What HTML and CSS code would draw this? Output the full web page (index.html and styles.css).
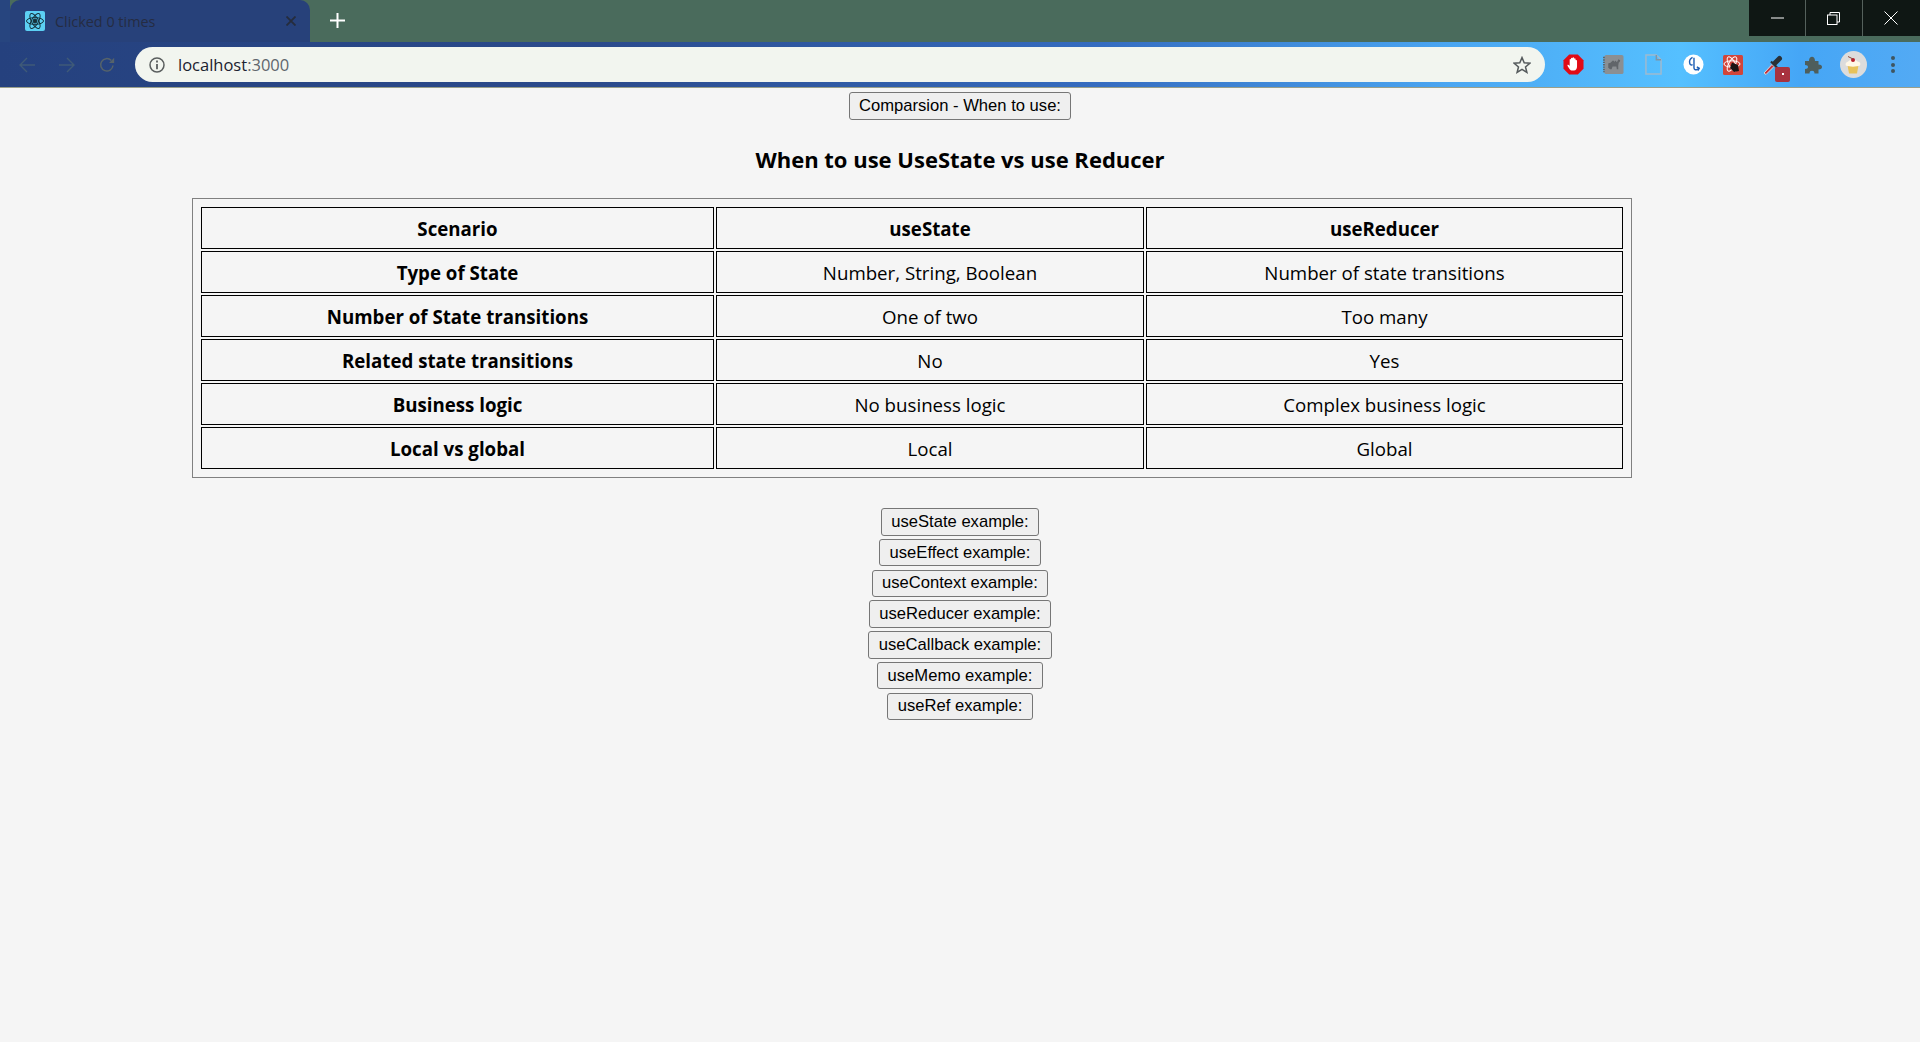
FILE: index.html
```html
<!DOCTYPE html>
<html lang="en">
<head>
    <meta charset="UTF-8">
    <meta name="viewport" content="width=device-width, initial-scale=1.0">
    <title>Clicked 0 times</title>
    <link rel="stylesheet" href="styles.css">
</head>
<body>

    <!-- Browser window -->
    <header class="browser">
        <div class="tab-strip">
            <div class="tab">
                <span class="favicon">
                    <svg viewBox="0 0 20 20" width="20" height="20" fill="none" stroke="#15303a" stroke-width="1">
                        <circle cx="10" cy="10" r="2" fill="#15303a"/>
                        <ellipse cx="10" cy="10" rx="8.5" ry="3.4"/>
                        <ellipse cx="10" cy="10" rx="8.5" ry="3.4" transform="rotate(60 10 10)"/>
                        <ellipse cx="10" cy="10" rx="8.5" ry="3.4" transform="rotate(120 10 10)"/>
                    </svg>
                </span>
                <span class="tab-title">Clicked 0 times</span>
                <svg class="tab-close" viewBox="0 0 10 10" width="10" height="10" stroke="#252c3c" stroke-width="1.8">
                    <path d="M0.5 0.5L9.5 9.5M9.5 0.5L0.5 9.5"/>
                </svg>
            </div>
            <svg class="new-tab" viewBox="0 0 15 15" width="15" height="15" stroke="#fff" stroke-width="2">
                <path d="M7.5 0V15M0 7.5H15"/>
            </svg>
            <div class="window-controls">
                <span class="win-btn win-min">
                    <svg viewBox="0 0 13 2" width="13" height="2" stroke="#fff"><path d="M0 1H13"/></svg>
                </span>
                <span class="win-btn win-max">
                    <svg viewBox="0 0 13 13" width="13" height="13" fill="none" stroke="#fff">
                        <path d="M3 3V0.5H12.5V10H10"/>
                        <rect x="0.5" y="3" width="9.5" height="9.5"/>
                    </svg>
                </span>
                <span class="win-btn win-close">
                    <svg viewBox="0 0 14 14" width="14" height="14" stroke="#fff"><path d="M0.5 0.5L13.5 13.5M13.5 0.5L0.5 13.5"/></svg>
                </span>
            </div>
        </div>

        <div class="toolbar">
            <svg class="nav-icon" viewBox="0 0 16 16" width="16" height="16" fill="none" stroke="#3f5a78" stroke-width="1.4">
                <path d="M16 8H1M8 1L1 8L8 15"/>
            </svg>
            <svg class="nav-icon" viewBox="0 0 16 16" width="16" height="16" fill="none" stroke="#3f5a78" stroke-width="1.4">
                <path d="M0 8H15M8 1L15 8L8 15"/>
            </svg>
            <svg class="nav-icon" viewBox="0 0 16 16" width="16" height="16" fill="none" stroke="#56636a" stroke-width="1.5">
                <path d="M14 8.5A6.2 6.2 0 1 1 12.2 3.4"/>
                <path d="M15.2 0.8V6H10Z" fill="#56636a" stroke="none"/>
            </svg>

            <div class="omnibox">
                <svg class="info-icon" viewBox="0 0 16 16" width="16" height="16" fill="none" stroke="#5a5e5e" stroke-width="1.5">
                    <circle cx="8" cy="8" r="7"/>
                    <path d="M8 7V12.2" stroke-width="1.8"/>
                    <path d="M8 3.6V5.4" stroke-width="1.8"/>
                </svg>
                <span class="url">localhost<span class="url-port">:3000</span></span>
                <svg class="star-icon" viewBox="0 0 18 18" width="18" height="18" fill="none" stroke="#555a5c" stroke-width="1.5">
                    <path d="M9 1.6L11.2 6.8L16.8 7.2L12.5 10.9L13.9 16.4L9 13.4L4.1 16.4L5.5 10.9L1.2 7.2L6.8 6.8Z"/>
                </svg>
            </div>

            <div class="extensions">
                <svg viewBox="0 0 22 22" width="21" height="21">
                    <path d="M6.5 0.5H15.5L21.5 6.5V15.5L15.5 21.5H6.5L0.5 15.5V6.5Z" fill="#e20a16"/>
                    <path d="M7 16C5.5 14 4.6 12.5 4.6 11.6C5.4 11 6.2 11.6 7 12.6V6C7 5 8.3 5 8.4 6V4.5C8.5 3.6 9.8 3.6 10 4.5V4C10.2 3.1 11.5 3.1 11.6 4V5C11.8 4.2 13.1 4.3 13.2 5.2V6.6C13.4 6 14.6 6 14.7 7V13C14.7 15.5 13.6 17 11.5 17.3H9.5C8.4 17.3 7.7 16.9 7 16Z" fill="#fff"/>
                </svg>
                <svg viewBox="0 0 22 22" width="21" height="21">
                    <rect x="1.5" y="1" width="20" height="20" rx="2" fill="#8b8f92"/>
                    <path d="M1 3V19" stroke="#5f6468" stroke-width="2" stroke-dasharray="1.5 1"/>
                    <path d="M5.5 14.5V10.5C5.5 9.5 6.5 9.5 7.5 9.5L9.5 7.5C10.5 6 11.5 7 12 8.5C12.5 7 13.5 6.5 14 8C14.6 9.5 15.5 7 16 5.5L18 6.5L17.5 8.5L16.5 9L16 12V16H14.5L14 13H10L9 16H7.5Z" fill="#616569"/>
                </svg>
                <svg viewBox="0 0 18 22" width="17" height="21" fill="none" stroke="#9dbad0" stroke-width="1.6">
                    <path d="M1 1H12L17 6V21H1Z"/>
                    <path d="M12 1V6H17" stroke="#7e95a8"/>
                </svg>
                <svg viewBox="0 0 22 22" width="21" height="21" fill="none" stroke="#1f5fb5" stroke-width="1.5">
                    <circle cx="11" cy="11" r="10.5" fill="#fff" stroke="none"/>
                    <path d="M10 3.5C8 4.5 6.5 7 7 9.5C7.4 11.5 9 12 10 11"/>
                    <path d="M11.5 4V14.5C11.5 16.5 13 17 15 16L17 15"/>
                    <path d="M14.5 13.5L17 15L15.5 17.5"/>
                </svg>
                <svg viewBox="0 0 22 22" width="22" height="22" fill="none" stroke="#fff" stroke-width="1">
                    <rect x="1" y="1" width="20" height="20" rx="1.5" fill="#d2453a" stroke="none"/>
                    <ellipse cx="10" cy="10" rx="8" ry="3.2"/>
                    <ellipse cx="10" cy="10" rx="8" ry="3.2" transform="rotate(60 10 10)"/>
                    <ellipse cx="10" cy="10" rx="8" ry="3.2" transform="rotate(120 10 10)"/>
                    <path d="M10 8.5L16 11L17 17L12 18L8 14Z" fill="#1c1414" stroke="none"/>
                </svg>
                <span class="ext-dropper">
                    <svg viewBox="0 0 20 20" width="20" height="20" fill="none">
                        <path d="M1 18L9 9.5L11 11.5L3 19.5Z" fill="#c8313a" stroke="#d5d9de"/>
                        <path d="M8 6.5L14 12.5" stroke="#2a3036" stroke-width="2.2"/>
                        <path d="M12 8L16.5 3.5" stroke="#2a3036" stroke-width="5" stroke-linecap="round"/>
                    </svg>
                    <span class="ext-badge"><i></i></span>
                </span>
                <svg viewBox="0 0 18 18" width="18" height="18">
                    <path d="M1 5H5C5 2 6.5 0.8 8 0.8C9.5 0.8 11 2 11 5H14.5V8.5C17 8.5 18 9.8 18 11C18 12.2 17 13.5 14.5 13.5V17.5H10.5C10.5 15.5 9.5 14.8 8 14.8C6.5 14.8 5.5 15.5 5.5 17.5H1V13C3 13 4 12.2 4 11C4 9.8 3 9 1 9Z" fill="#4e5e5c"/>
                </svg>
                <span class="avatar">
                    <svg viewBox="0 0 20 20" width="20" height="20">
                        <path d="M4.5 10L6 18.5H14L15.5 10Z" fill="#e8c25a"/>
                        <path d="M2.8 10.5C2 8 4 7 5 6.8C6 4.5 13 4 14.5 6.5C17 6.8 18 8.5 17 10.5C13 12 7 12 2.8 10.5Z" fill="#fff7e6"/>
                        <circle cx="10" cy="5" r="2" fill="#b81d2c"/>
                        <path d="M10 4L5 1.5" stroke="#8b4a3a"/>
                    </svg>
                </span>
                <span class="menu-dots"><i></i><i></i><i></i></span>
            </div>
        </div>
    </header>

    <!-- Page content -->
    <main class="page">
        <button class="example-btn comparison-btn">Comparsion - When to use:</button>
        <h2 class="table-title">When to use UseState vs use Reducer</h2>

        <table class="compare-table">
            <colgroup>
                <col class="col-scenario">
                <col class="col-state">
                <col class="col-reducer">
            </colgroup>
            <tr><th>Scenario</th><th>useState</th><th>useReducer</th></tr>
            <tr><th>Type of State</th><td>Number, String, Boolean</td><td>Number of state transitions</td></tr>
            <tr><th>Number of State transitions</th><td>One of two</td><td>Too many</td></tr>
            <tr><th>Related state transitions</th><td>No</td><td>Yes</td></tr>
            <tr><th>Business logic</th><td>No business logic</td><td>Complex business logic</td></tr>
            <tr><th>Local vs global</th><td>Local</td><td>Global</td></tr>
        </table>

        <div class="example-list">
            <button class="example-btn">useState example:</button>
            <button class="example-btn">useEffect example:</button>
            <button class="example-btn">useContext example:</button>
            <button class="example-btn">useReducer example:</button>
            <button class="example-btn">useCallback example:</button>
            <button class="example-btn">useMemo example:</button>
            <button class="example-btn">useRef example:</button>
        </div>
    </main>

</body>
</html>
```

FILE: styles.css
```css
* {
    box-sizing: border-box;
}
html, body {
    height: 100%;
}
body {
    margin: 0;
    background-color: #f5f5f5;
    color: #000;
    font-family: "Open Sans", sans-serif;
    overflow: hidden;
}

/* Browser window */
.browser {
    height: 88px;
    border-bottom: 1px solid #9a9f8a;
}
.tab-strip {
    display: flex;
    align-items: flex-start;
    height: 42px;
    padding-left: 10px;
    background: linear-gradient(to right, #27457f 10px, #4a6b5c 10px);
}
.tab {
    display: flex;
    align-items: center;
    width: 300px;
    height: 42px;
    padding: 0 14px 0 15px;
    background-color: #27417a;
    border-radius: 10px 10px 0 0;
}
.favicon {
    display: flex;
    align-items: center;
    justify-content: center;
    width: 20px;
    height: 20px;
    background-color: #5cd0f4;
    border-radius: 2px;
}
.tab-title {
    flex: 1;
    margin-left: 10px;
    font-size: 14.4px;
    color: #252c42;
}
.new-tab {
    margin: 13px 0 0 20px;
}
.window-controls {
    display: flex;
    height: 36px;
    margin-left: auto;
    background-color: #0f1714;
}
.win-btn {
    display: flex;
    align-items: center;
    justify-content: center;
    height: 36px;
}
.win-min {
    width: 56px;
}
.win-max {
    width: 58px;
    padding-right: 2px;
    border-left: 1px solid #55615c;
    border-right: 1px solid #55615c;
}
.win-close {
    width: 57px;
    padding-right: 2px;
}
.toolbar {
    display: flex;
    align-items: center;
    height: 45px;
    padding-left: 19px;
    background: linear-gradient(to right, #25417e 0, #2b4a8c 600px, #356cc0 1100px, #4aa6f2 1450px, #55c0ff 1680px, #45a6f6 1800px, #53aaf4 1920px);
}
.nav-icon {
    margin-right: 24px;
}
.omnibox {
    display: flex;
    align-items: center;
    width: 1410px;
    height: 35px;
    margin-left: -4px;
    padding: 0 14px;
    background-color: #f2f5ef;
    border-radius: 18px;
}
.info-icon {
    margin-right: 13px;
}
.url {
    flex: 1;
    font-size: 16.5px;
    color: #1b2230;
}
.url-port {
    color: #5f666c;
}
.extensions {
    display: grid;
    grid-auto-flow: column;
    grid-auto-columns: 40px;
    align-items: center;
    justify-items: center;
    padding-left: 8px;
}
.ext-dropper {
    position: relative;
    display: block;
    width: 20px;
    height: 20px;
}
.ext-badge {
    position: absolute;
    left: 12px;
    top: 12px;
    display: flex;
    align-items: center;
    justify-content: center;
    width: 15px;
    height: 15px;
    background-color: #a8323f;
    border-radius: 2px;
}
.ext-badge i {
    width: 2px;
    height: 2px;
    background-color: #fff;
}
.avatar {
    display: flex;
    align-items: center;
    justify-content: center;
    width: 27px;
    height: 27px;
    background-color: #dcdcdc;
    border-radius: 50%;
}
.menu-dots {
    display: flex;
    flex-direction: column;
    gap: 2.5px;
}
.menu-dots i {
    display: block;
    width: 4px;
    height: 4px;
    background-color: #3f5560;
    border-radius: 50%;
}

/* Page content */
.page {
    padding-top: 4px;
    text-align: center;
}
.example-btn {
    display: block;
    height: 27.5px;
    padding: 0 9.5px;
    background-color: #efefef;
    border: 1px solid #767676;
    border-radius: 3px;
    color: #000;
    font-family: "Liberation Sans", Arial, sans-serif;
    font-size: 16.6px;
}
.comparison-btn {
    margin: 0 auto;
}
.table-title {
    margin: 24px 0 0;
    font-size: 22px;
    line-height: 30px;
    font-weight: 700;
}
.compare-table {
    width: 75%;
    margin: 24px 0 0 10%;
    padding: 6px;
    table-layout: fixed;
    border: 1px solid #808080;
    border-spacing: 2px;
    font-size: 18.7px;
}
.col-scenario {
    width: 513px;
}
.col-state {
    width: 428px;
}
.compare-table th, .compare-table td {
    height: 42px;
    padding: 2px 0 0;
    border: 1px solid #000;
    text-align: center;
}
.compare-table td {
    font-weight: 400;
}
.example-list {
    display: flex;
    flex-direction: column;
    align-items: center;
    gap: 3.25px;
    margin-top: 30.5px;
}
```
